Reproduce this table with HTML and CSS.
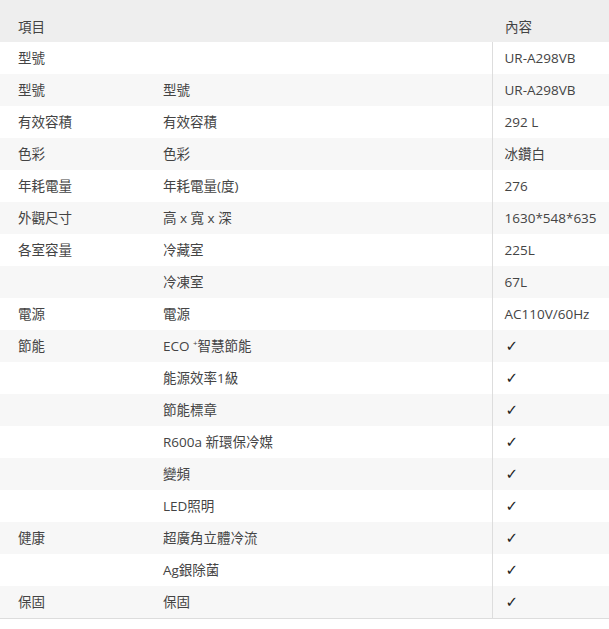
FILE: index.html
```html
<!DOCTYPE html>
<html lang="zh-Hant">
<head>
<meta charset="utf-8">
<title>規格</title>
<link rel="stylesheet" href="styles.css">
</head>
<body>
<table class="spec">
  <colgroup><col class="c1"><col class="c2"><col class="c3"></colgroup>
  <thead>
    <tr><th>項目</th><th></th><th class="val">內容</th></tr>
  </thead>
  <tbody>
    <tr><td>型號</td><td></td><td class="val">UR-A298VB</td></tr>
    <tr><td>型號</td><td>型號</td><td class="val">UR-A298VB</td></tr>
    <tr><td>有效容積</td><td>有效容積</td><td class="val">292 L</td></tr>
    <tr><td>色彩</td><td>色彩</td><td class="val">冰鑽白</td></tr>
    <tr><td>年耗電量</td><td>年耗電量(度)</td><td class="val">276</td></tr>
    <tr><td>外觀尺寸</td><td>高 x 寬 x 深</td><td class="val">1630*548*635</td></tr>
    <tr><td>各室容量</td><td>冷藏室</td><td class="val">225L</td></tr>
    <tr><td></td><td>冷凍室</td><td class="val">67L</td></tr>
    <tr><td>電源</td><td>電源</td><td class="val">AC110V/60Hz</td></tr>
    <tr><td>節能</td><td>ECO <sup>+</sup>智慧節能</td><td class="val"><span class="chk">✓</span></td></tr>
    <tr><td></td><td>能源效率1級</td><td class="val"><span class="chk">✓</span></td></tr>
    <tr><td></td><td>節能標章</td><td class="val"><span class="chk">✓</span></td></tr>
    <tr><td></td><td>R600a 新環保冷媒</td><td class="val"><span class="chk">✓</span></td></tr>
    <tr><td></td><td>變頻</td><td class="val"><span class="chk">✓</span></td></tr>
    <tr><td></td><td>LED照明</td><td class="val"><span class="chk">✓</span></td></tr>
    <tr><td>健康</td><td>超廣角立體冷流</td><td class="val"><span class="chk">✓</span></td></tr>
    <tr><td></td><td>Ag銀除菌</td><td class="val"><span class="chk">✓</span></td></tr>
    <tr><td>保固</td><td>保固</td><td class="val"><span class="chk">✓</span></td></tr>
  </tbody>
</table>
</body>
</html>
```
FILE: styles.css
```css
html, body {
  margin: 0;
  padding: 0;
  background: #ffffff;
}
body {
  font-family: "Open Sans", "Noto Sans CJK TC", sans-serif;
  font-size: 13.5px;
  color: #444444;
}
.spec {
  width: 609px;
  border-collapse: collapse;
  table-layout: fixed;
  border-bottom: 1px solid #dddddd;
}
.c1 { width: 145px; }
.c2 { width: 347px; }
.c3 { width: 117px; }
.spec th {
  background: #eeeeee;
  font-weight: normal;
  text-align: left;
  height: 42px;
  box-sizing: border-box;
  padding: 18px 0 6px 18px;
  line-height: 18px;
  vertical-align: top;
}
.spec td {
  height: 32px;
  box-sizing: border-box;
  padding: 0 0 0 18px;
  line-height: 18px;
  vertical-align: middle;
  white-space: nowrap;
}
.spec th.val { padding-left: 13px; }
.spec td.val {
  padding-left: 12px;
  border-left: 1px solid #dddddd;
}
.spec tbody tr:nth-child(even) td { background: #f7f7f7; }
.spec sup {
  font-size: 8px;
  vertical-align: 5px;
  line-height: 0;
}
.chk {
  font-family: "DejaVu Sans", sans-serif;
  font-weight: bold;
  font-size: 15px;
  color: #222222;
  padding-left: 1px;
}
```
